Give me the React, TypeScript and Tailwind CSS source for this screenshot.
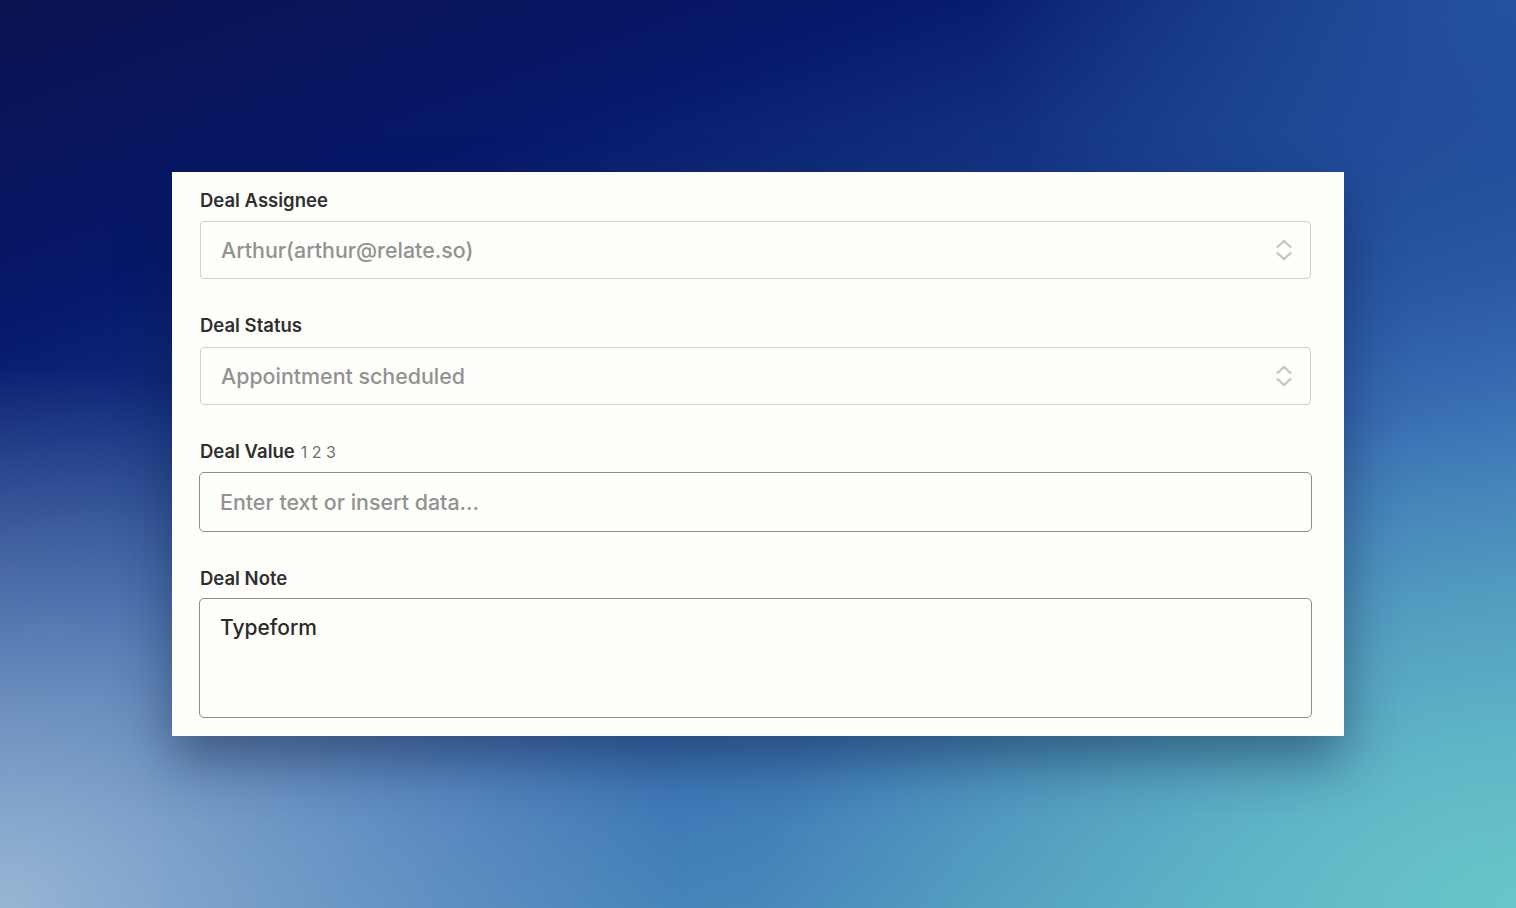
import React from "react";

function UpDown() {
  return (
    <svg width="18" height="26" viewBox="0 0 18 26" fill="none" className="shrink-0">
      <path d="M2.5 10 9 3.8l6.5 6.2" stroke="#c8c8c6" strokeWidth="2.4" strokeLinecap="round" strokeLinejoin="round" />
      <path d="M2.5 16 9 22.2l6.5-6.2" stroke="#c8c8c6" strokeWidth="2.4" strokeLinecap="round" strokeLinejoin="round" />
    </svg>
  );
}

function Label({ children, hint }: { children: React.ReactNode; hint?: string }) {
  return (
    <div className="flex h-[22px] items-baseline gap-1.5 pl-px text-[18.5px] font-semibold leading-[22px] text-[#2f2f2f]">
      {children}
      {hint && <span className="text-[16px] font-normal leading-[22px] text-[#707070]">{hint}</span>}
    </div>
  );
}

function SelectField({ label, value, gap }: { label: string; value: string; gap: string }) {
  return (
    <div className={`flex flex-col ${gap}`}>
      <Label>{label}</Label>
      <div className="mx-px flex h-[58px] items-center justify-between rounded-[4px] border border-[#cfcfcd] pl-5 pr-[17px]">
        <span className="pt-px text-[21.4px] font-medium text-[#929290]">{value}</span>
        <UpDown />
      </div>
    </div>
  );
}

export default function App() {
  return (
    <div className="flex h-[908px] w-full items-start justify-center bg-[image:radial-gradient(ellipse_45%_60%_at_0%_100%,#97b6d4_0%,#7d9dca00_100%),radial-gradient(ellipse_50%_55%_at_100%_100%,#68c6ca_0%,#5fb8c800_100%),radial-gradient(ellipse_35%_45%_at_100%_0%,#2452a0_0%,#2452a000_100%),linear-gradient(160deg,#0b1350_0%,#06186a_22%,#1d4594_45%,#3a70b4_65%,#4a8cbc_85%,#58a6c4_100%)] pt-[172px] font-['Inter','Liberation_Sans',sans-serif]">
      <div className="w-[1172px] bg-[#fefefb] pb-[18px] pl-[27px] pr-[32px] pt-[17px] shadow-[0_24px_50px_rgba(10,25,60,0.45)]">
        <div className="flex flex-col gap-[35px]">
          <SelectField label="Deal Assignee" value="Arthur(arthur@relate.so)" gap="gap-[10px]" />
          <SelectField label="Deal Status" value="Appointment scheduled" gap="gap-[11px]" />
          <div className="flex flex-col gap-[10px]">
            <Label hint="1 2 3">Deal Value</Label>
            <div className="flex h-[60px] items-center rounded-[5px] border-[1.5px] border-[#8e8e8c] px-5">
              <span className="text-[21.4px] font-medium text-[#929290]">Enter text or insert data...</span>
            </div>
          </div>
          <div className="flex flex-col gap-[9px]">
            <Label>Deal Note</Label>
            <div className="h-[120px] rounded-[5px] border-[1.5px] border-[#8e8e8c] px-5 pt-[13px]">
              <span className="text-[21px] font-medium text-[#2a2a2a]">Typeform</span>
            </div>
          </div>
        </div>
      </div>
    </div>
  );
}
